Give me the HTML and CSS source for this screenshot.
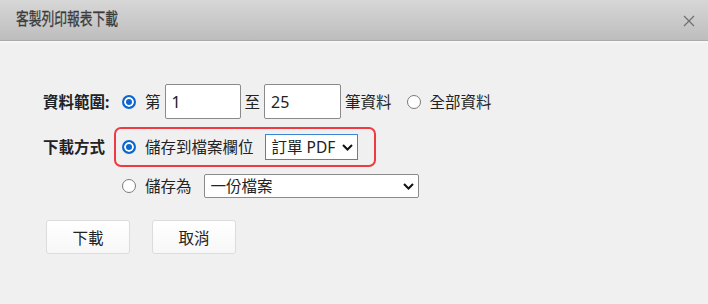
FILE: index.html
```html
<!DOCTYPE html>
<html lang="zh-Hant">
<head>
    <meta charset="UTF-8">
    <meta name="viewport" content="width=device-width, initial-scale=1.0">
    <title>客製列印報表下載</title>
    <link rel="stylesheet" href="styles.css">
</head>
<body>
    <div class="dialog">
        <div class="dlg-head">
            <span class="dlg-title">客製列印報表下載</span>
            <button class="dlg-close" title="關閉">
                <svg width="12" height="12" viewBox="0 0 12 12">
                    <path d="M1 1 L11 11 M11 1 L1 11" stroke="#6f6f6f" stroke-width="1.2" fill="none"/>
                </svg>
            </button>
        </div>
        <div class="dlg-body">
            <!-- range -->
            <div class="row">
                <span class="label">資料範圍:</span>
                <div class="controls">
                    <label class="opt"><input type="radio" name="range" checked> 第</label>
                    <input class="num" type="text" value="1">
                    <span class="txt">至</span>
                    <input class="num" type="text" value="25">
                    <span class="txt">筆資料</span>
                    <label class="opt opt-all"><input type="radio" name="range"> 全部資料</label>
                </div>
            </div>
            <!-- download mode -->
            <div class="row">
                <span class="label">下載方式</span>
                <div class="controls highlight">
                    <label class="opt"><input type="radio" name="mode" checked> 儲存到檔案欄位</label>
                    <span class="sel sel-field">
                        <select>
                            <option>訂單 PDF</option>
                        </select>
                        <svg class="chev" width="11" height="7" viewBox="0 0 11 7"><path d="M1 1 L5.5 5.5 L10 1" stroke="#111" stroke-width="2" fill="none"/></svg>
                    </span>
                </div>
            </div>
            <div class="row row-sub">
                <div class="controls">
                    <label class="opt"><input type="radio" name="mode"> 儲存為</label>
                    <span class="sel sel-file">
                        <select>
                            <option>一份檔案</option>
                        </select>
                        <svg class="chev" width="11" height="7" viewBox="0 0 11 7"><path d="M1 1 L5.5 5.5 L10 1" stroke="#111" stroke-width="2" fill="none"/></svg>
                    </span>
                </div>
            </div>
            <div class="buttons">
                <button class="btn">下載</button>
                <button class="btn">取消</button>
            </div>
        </div>
    </div>
</body>
</html>
```

FILE: styles.css
```css
body {
    margin: 0;
    background: #f0f0f0;
    font-family: "Noto Sans", "Noto Sans CJK TC", sans-serif;
    color: #222222;
}
.dialog {
    width: 708px;
    height: 304px;
    background: #f0f0f0;
}
.dlg-head {
    height: 40px;
    display: flex;
    align-items: center;
    justify-content: space-between;
    padding: 0 13px 0 16px;
    background: linear-gradient(#d7d7d7, #bdbdbd);
    border-bottom: 1px solid #ababab;
    box-shadow: 0 2px 0 #f6f6f6;
}
.dlg-title {
    display: inline-block;
    font-size: 17px;
    line-height: 20px;
    color: #3c3c3c;
    -webkit-text-stroke: 0.3px #3c3c3c;
    transform: scaleX(0.75);
    transform-origin: left center;
    margin-top: -2px;
}
.dlg-close {
    background: transparent;
    border: none;
    padding: 0;
    display: flex;
    margin-top: 2px;
}
.dlg-body {
    padding: 43px 0 0 43px;
}
.row {
    display: flex;
    align-items: center;
    margin-bottom: 8px;
}
.label {
    width: 71px;
    font-size: 15.5px;
    font-weight: bold;
    line-height: 20px;
}
.controls {
    display: flex;
    align-items: center;
    height: 35px;
    padding-left: 8px;
    font-size: 15.5px;
    line-height: 20px;
}
.highlight {
    height: 36px;
    padding: 0 16px 0 6px;
    border: 2px solid #ee3a41;
    border-radius: 7px;
}
.row-sub {
    margin-left: 71px;
    margin-top: -1px;
}
.row-sub .controls {
    height: 24px;
}
.opt {
    display: flex;
    align-items: center;
}
.opt input {
    appearance: none;
    width: 14px;
    height: 14px;
    margin: 0 9px 0 0;
    border: 1px solid #7a7a7a;
    border-radius: 50%;
    background: #ffffff;
}
.opt input:checked {
    border: 2px solid #0b67d0;
    background: #0b67d0;
    box-shadow: inset 0 0 0 2px #ffffff;
}
.opt-all {
    margin-left: 15px;
}
.num {
    width: 76px;
    height: 35px;
    box-sizing: border-box;
    margin: 0 4px;
    padding: 0 6px;
    border: 1px solid #8a8a8a;
    border-radius: 2px;
    font-family: inherit;
    font-size: 16px;
    color: #222222;
    background: #ffffff;
}
.num:last-of-type {
    width: 77px;
}
.txt {
    display: inline-block;
}
.sel {
    position: relative;
    display: inline-flex;
}
.sel select {
    appearance: none;
    box-sizing: border-box;
    font-family: inherit;
    font-size: 15.5px;
    color: #222222;
    background: #ffffff;
    border: 1px solid #8a8a8a;
    border-radius: 2px;
    padding: 0 20px 0 6px;
}
.sel .chev {
    position: absolute;
    right: 5px;
    top: 50%;
    margin-top: -3px;
    pointer-events: none;
}
.sel-field {
    margin-left: 11px;
}
.sel-field select {
    width: 93px;
    height: 26px;
    border-color: #3a86d8;
    border-radius: 0;
}
.sel-file {
    margin-left: 12px;
}
.sel-file select {
    width: 215px;
    height: 24px;
}
.buttons {
    display: flex;
    gap: 22px;
    margin: 22px 0 0 3px;
}
.btn {
    width: 84px;
    height: 34px;
    font-family: inherit;
    font-size: 15.5px;
    color: #222222;
    background: linear-gradient(#ffffff, #f7f7f7);
    border: 1px solid #dcdcdc;
    border-radius: 3px;
}
```
